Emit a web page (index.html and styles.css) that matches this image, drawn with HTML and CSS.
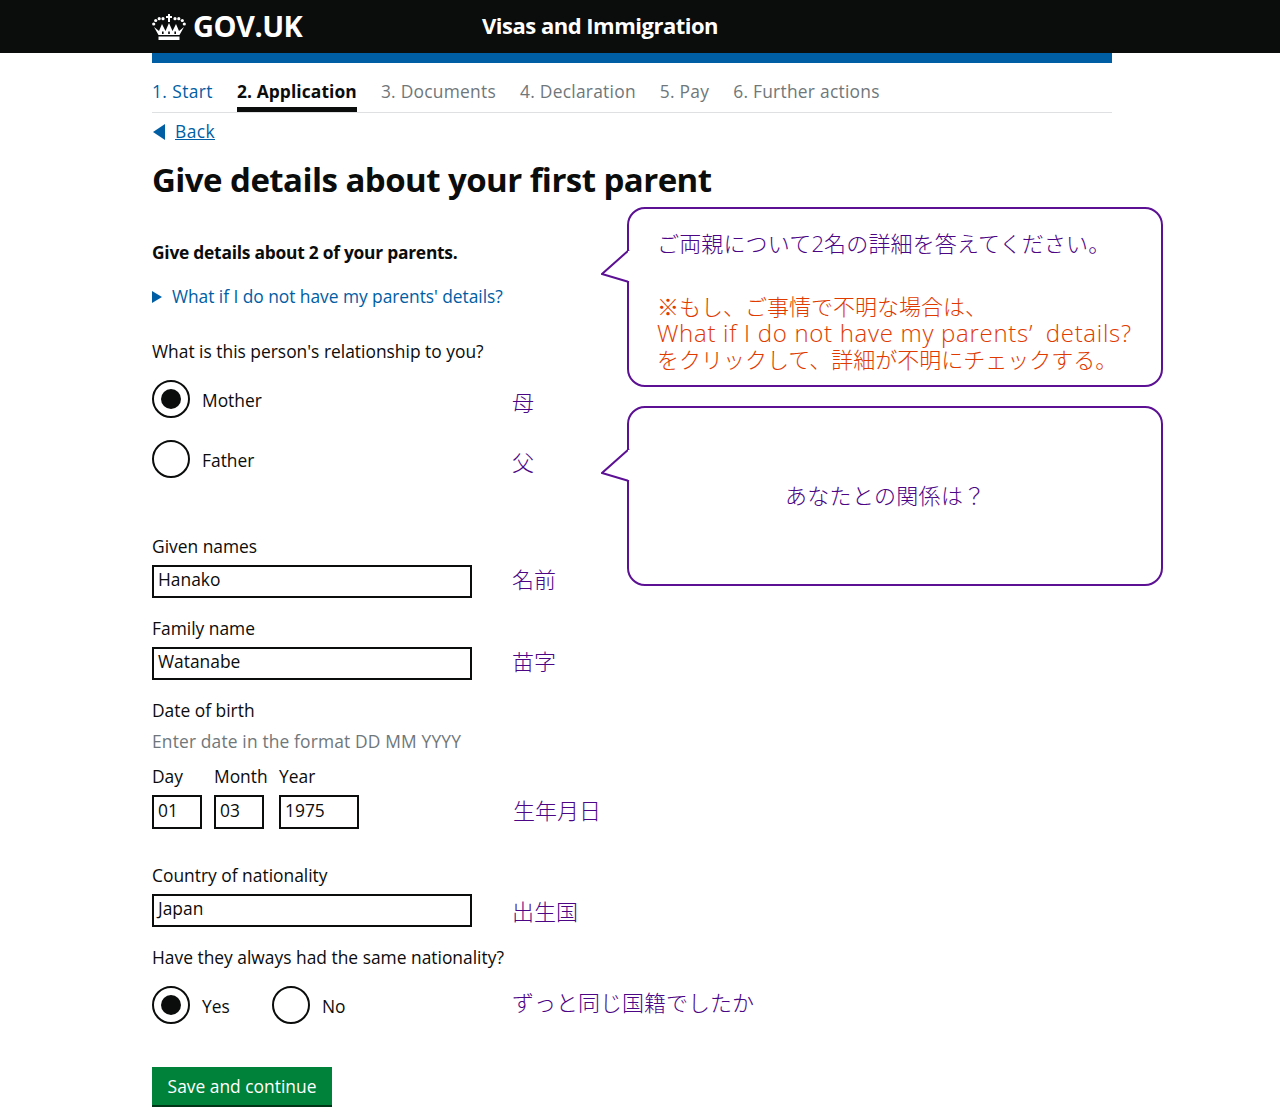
FILE: index.html
```html
<!DOCTYPE html>
<html lang="en">

<head>
    <meta charset="UTF-8">
    <meta name="viewport" content="width=device-width, initial-scale=1.0">
    <title>Give details about your first parent</title>
    <link rel="stylesheet" href="styles.css">
</head>

<body>
    <header class="top">
        <div class="top-inner">
            <a class="logo" href="#">
                <svg class="crown" viewBox="0 0 34 26" width="34" height="26">
                    <g fill="#fff">
                        <rect x="16" y="0" width="2" height="8"/>
                        <rect x="14" y="2" width="6" height="2"/>
                        <circle cx="1.7" cy="10" r="1.6"/>
                        <circle cx="3.7" cy="6.5" r="1.6"/>
                        <circle cx="7.2" cy="4.7" r="1.6"/>
                        <circle cx="11" cy="4.7" r="1.6"/>
                        <circle cx="23" cy="4.7" r="1.6"/>
                        <circle cx="26.8" cy="4.7" r="1.6"/>
                        <circle cx="30.3" cy="6.5" r="1.6"/>
                        <circle cx="32.3" cy="10" r="1.6"/>
                        <path d="M2 13 L6.5 21 H27.5 L32 13 L27 17 L24 10 L20.5 17 L17 9 L13.5 17 L10 10 L7 17 Z"/>
                        <rect x="6.5" y="22.5" width="21" height="3.5"/>
                    </g>
                    <g fill="#0b0c0c">
                        <rect x="10" y="17.5" width="1.6" height="2.5"/>
                        <rect x="16.2" y="17.5" width="1.6" height="2.5"/>
                        <rect x="22.4" y="17.5" width="1.6" height="2.5"/>
                    </g>
                </svg>
                <span>GOV.UK</span>
            </a>
            <div class="service">Visas and Immigration</div>
        </div>
    </header>

    <div class="page">
        <div class="blue-bar"></div>
        <ul class="steps">
            <li class="done">1. Start</li>
            <li class="current">2. Application</li>
            <li>3. Documents</li>
            <li>4. Declaration</li>
            <li>5. Pay</li>
            <li>6. Further actions</li>
        </ul>

        <a class="back" href="#"><span class="back-arrow"></span><span class="back-text">Back</span></a>
        <h1>Give details about your first parent</h1>
        <p class="lead">Give details about 2 of your parents.</p>
        <p class="details"><span class="details-arrow"></span>What if I do not have my parents' details?</p>

        <p class="question">What is this person's relationship to you?</p>
        <div class="row radio-row">
            <label class="radio"><span class="circle checked"></span><span class="radio-text">Mother</span></label>
            <span class="note">母</span>
        </div>
        <div class="row radio-row second">
            <label class="radio"><span class="circle"></span><span class="radio-text">Father</span></label>
            <span class="note">父</span>
        </div>

        <div class="field given">
            <label>Given names</label>
            <div class="row">
                <div class="input wide">Hanako</div>
                <span class="note name-note">名前</span>
            </div>
        </div>
        <div class="field">
            <label>Family name</label>
            <div class="row">
                <div class="input wide">Watanabe</div>
                <span class="note name-note">苗字</span>
            </div>
        </div>

        <div class="field">
            <label>Date of birth</label>
            <p class="hint">Enter date in the format DD MM YYYY</p>
            <div class="row date-row">
                <div class="date-part day">
                    <label>Day</label>
                    <div class="input">01</div>
                </div>
                <div class="date-part month">
                    <label>Month</label>
                    <div class="input">03</div>
                </div>
                <div class="date-part year">
                    <label>Year</label>
                    <div class="input">1975</div>
                </div>
                <span class="note date-note">生年月日</span>
            </div>
        </div>

        <div class="field country">
            <label>Country of nationality</label>
            <div class="row">
                <div class="input wide">Japan</div>
                <span class="note country-note">出生国</span>
            </div>
        </div>

        <p class="question same">Have they always had the same nationality?</p>
        <div class="row radio-row yes-no">
            <label class="radio yes"><span class="circle checked"></span><span class="radio-text">Yes</span></label>
            <label class="radio no"><span class="circle"></span><span class="radio-text">No</span></label>
            <span class="note long">ずっと同じ国籍でしたか</span>
        </div>

        <button class="save">Save and continue</button>
    </div>

    <!-- 吹き出し -->
    <div class="callout callout-top">
        <svg class="tail" viewBox="0 0 30 36" width="30" height="36">
            <path d="M28 1 L1 25 L28 33" fill="#fff" stroke="#5c1094" stroke-width="2"/>
            <rect x="27" y="2" width="3" height="30" fill="#fff"/>
        </svg>
        <p class="intro">ご両親について2名の詳細を答えてください。</p>
        <div class="warn">
            <p>※もし、ご事情で不明な場合は、</p>
            <p class="latin">What if I do not have my parents’&ensp;details?</p>
            <p>をクリックして、詳細が不明にチェックする。</p>
        </div>
    </div>
    <div class="callout callout-bottom">
        <svg class="tail" viewBox="0 0 30 36" width="30" height="36">
            <path d="M28 1 L1 25 L28 33" fill="#fff" stroke="#5c1094" stroke-width="2"/>
            <rect x="27" y="2" width="3" height="30" fill="#fff"/>
        </svg>
        <p>あなたとの関係は？</p>
    </div>
</body>

</html>
```

FILE: styles.css
```css
* {
    box-sizing: border-box;
}

body {
    margin: 0;
    background-color: #fff;
    color: #0b0c0c;
    font-family: "Open Sans", "Noto Sans CJK JP", sans-serif;
    font-size: 17.4px;
    line-height: 25px;
}

p {
    margin: 0;
}

.top {
    height: 53px;
    background-color: #0b0c0c;
}

.top-inner {
    display: flex;
    align-items: center;
    height: 53px;
    margin-left: 152px;
}

.logo {
    display: flex;
    align-items: center;
    width: 330px;
    color: #fff;
    font-size: 29px;
    font-weight: 700;
    letter-spacing: -0.5px;
    text-decoration: none;
}

.logo span {
    margin-bottom: 2px;
}

.crown {
    margin-right: 7px;
}

.service {
    margin-bottom: 2px;
    color: #fff;
    font-size: 22px;
    font-weight: 700;
    letter-spacing: -0.5px;
}

.page {
    width: 960px;
    margin-left: 152px;
}

.blue-bar {
    height: 10px;
    background-color: #005ea5;
}

.steps {
    display: flex;
    gap: 24px;
    margin: 0;
    padding: 0;
    list-style: none;
    border-bottom: 1px solid #dee0e2;
    color: #6f777b;
    letter-spacing: 0.25px;
}

.steps li {
    padding-top: 16px;
    padding-bottom: 3px;
    border-bottom: 5px solid transparent;
}

.steps .done {
    color: #005ea5;
    letter-spacing: 0.4px;
}

.steps .current {
    color: #0b0c0c;
    font-weight: 700;
    border-bottom-color: #0b0c0c;
    letter-spacing: 0.1px;
}

.back {
    display: flex;
    align-items: center;
    margin-top: 6px;
    color: #005ea5;
}

.back-arrow {
    width: 0;
    height: 0;
    margin-left: 1px;
    margin-right: 10px;
    border-top: 8px solid transparent;
    border-bottom: 8px solid transparent;
    border-right: 12px solid #005ea5;
}

.back-text {
    text-decoration: underline;
    letter-spacing: 0.4px;
}

h1 {
    margin: 14px 0 0;
    font-size: 33px;
    line-height: 44px;
    font-weight: 700;
    letter-spacing: -0.55px;
}

.lead {
    margin-top: 38px;
    font-weight: 700;
    letter-spacing: -0.25px;
}

.details {
    display: flex;
    align-items: center;
    margin-top: 19px;
    color: #005ea5;
    letter-spacing: -0.05px;
}

.details-arrow {
    width: 0;
    height: 0;
    margin-right: 10px;
    border-top: 6px solid transparent;
    border-bottom: 6px solid transparent;
    border-left: 10px solid #005ea5;
}

.question {
    margin-top: 30px;
}

.row {
    display: flex;
    align-items: center;
}

.radio-row {
    margin-top: 16px;
}

.radio-row.second {
    margin-top: 22px;
}

.radio {
    display: flex;
    align-items: center;
    width: 360px;
}

.radio-text {
    padding-top: 2px;
}

.circle {
    position: relative;
    width: 38px;
    height: 38px;
    margin-right: 12px;
    border: 2px solid #0b0c0c;
    border-radius: 50%;
}

.circle.checked::after {
    content: "";
    position: absolute;
    top: 7px;
    left: 7px;
    width: 20px;
    height: 20px;
    border-radius: 50%;
    background-color: #0b0c0c;
}

.note {
    color: #4b0585;
    font-size: 22px;
    font-weight: 300;
    padding-top: 6px;
}

.note.name-note {
    padding-top: 0;
    padding-bottom: 4px;
}

.note.country-note {
    padding-top: 2px;
}

.field {
    margin-top: 18px;
}

.field.given {
    margin-top: 56px;
}

.field.country {
    margin-top: 34px;
}

.field label {
    display: block;
    margin-bottom: 6px;
}

.input {
    height: 33px;
    padding-left: 4px;
    border: 2px solid #0b0c0c;
    line-height: 25px;
}

.input.wide {
    width: 320px;
    margin-right: 40px;
}

.hint {
    margin-top: 6px;
    color: #6f777b;
    letter-spacing: 0.15px;
}

.date-row {
    margin-top: 10px;
    align-items: flex-end;
}

.date-part .input {
    height: 34px;
    padding-top: 1px;
}

.day {
    width: 50px;
    margin-right: 12px;
}

.month {
    width: 50px;
    margin-right: 15px;
}

.year {
    width: 80px;
}

.date-note {
    margin-left: 154px;
    padding-top: 0;
    padding-bottom: 6px;
}

.question.same {
    margin-top: 18px;
}

.radio.yes {
    width: 120px;
}

.radio.no {
    width: 240px;
}

.note.long {
    padding-top: 0;
    margin-bottom: 6px;
}

.save {
    display: block;
    width: 180px;
    height: 40px;
    margin-top: 43px;
    padding: 0;
    background-color: #00823b;
    border: none;
    border-bottom: 2px solid #003618;
    color: #fff;
    font-family: inherit;
    font-size: 17.4px;
}

.callout {
    position: absolute;
    left: 627px;
    width: 536px;
    height: 180px;
    background-color: #fff;
    border: 2px solid #5c1094;
    border-radius: 18px;
    color: #4b0585;
    font-size: 22px;
    font-weight: 300;
}

.tail {
    position: absolute;
    left: -28px;
    top: 40px;
}

.callout-top {
    top: 207px;
    padding: 22px 0 0 28px;
}

.intro {
    letter-spacing: 0.15px;
}

.warn {
    margin-top: 37px;
    color: #e03a00;
    line-height: 26.5px;
}

.latin {
    font-size: 24px;
    letter-spacing: 0.7px;
    white-space: nowrap;
}

.callout-bottom {
    top: 406px;
}

.callout-bottom p {
    margin-top: 75px;
    margin-left: 156px;
    letter-spacing: 0.3px;
}
```
